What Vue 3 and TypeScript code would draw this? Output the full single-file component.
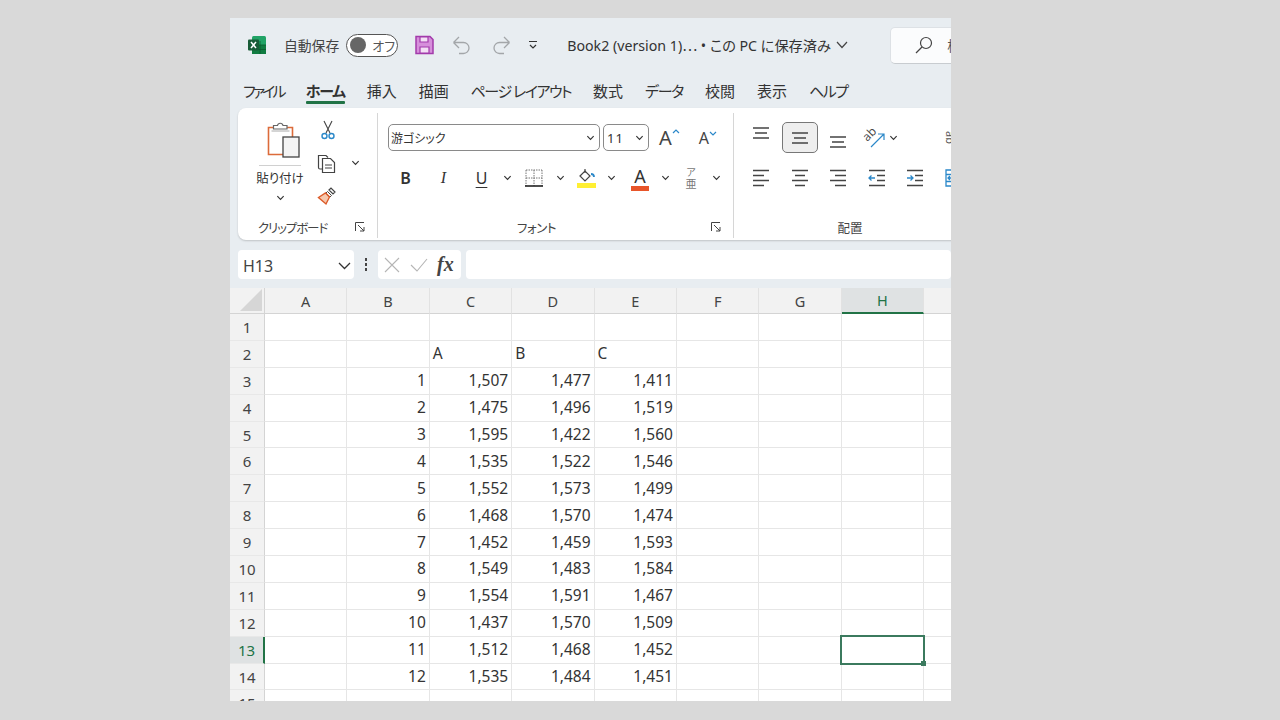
<script setup lang="ts">
// track はカタカナ幅を詰めるための字間（px）
const tabs = [
  { label: 'ファイル', track: -2.8 },
  { label: 'ホーム', track: -1.3 },
  { label: '挿入', track: 0 },
  { label: '描画', track: 0 },
  { label: 'ページ レイアウト', track: -1.5 },
  { label: '数式', track: 0 },
  { label: 'データ', track: -1.3 },
  { label: '校閲', track: 0 },
  { label: '表示', track: 0 },
  { label: 'ヘルプ', track: -1.6 }
]
const columns = ['A', 'B', 'C', 'D', 'E', 'F', 'G', 'H', 'I']

const values: number[][] = [
  [1507, 1477, 1411],
  [1475, 1496, 1519],
  [1595, 1422, 1560],
  [1535, 1522, 1546],
  [1552, 1573, 1499],
  [1468, 1570, 1474],
  [1452, 1459, 1593],
  [1549, 1483, 1584],
  [1554, 1591, 1467],
  [1437, 1570, 1509],
  [1512, 1468, 1452],
  [1535, 1484, 1451]
]

interface Cell {
  text: string
  kind: '' | 'num' | 'label'
  selected: boolean
}

// 行データをセルの配列に展開する
const buildRow = (row: number): Cell[] => {
  return columns.map((col, i) => {
    const cell: Cell = { text: '', kind: '', selected: row === 13 && col === 'H' }
    if (row === 2 && i >= 2 && i <= 4) {
      cell.text = ['A', 'B', 'C'][i - 2]
      cell.kind = 'label'
    }
    if (row >= 3 && row <= 14) {
      if (i === 1) {
        cell.text = String(row - 2)
        cell.kind = 'num'
      }
      if (i >= 2 && i <= 4) {
        cell.text = values[row - 3][i - 2].toLocaleString('en-US')
        cell.kind = 'num'
      }
    }
    return cell
  })
}

const rows = Array.from({ length: 15 }, (_, i) => ({ no: i + 1, cells: buildRow(i + 1) }))

const alignLeft = 'M1 1.500h16M1 6.500h11M1 11.500h16M1 16.500h11'
const alignCenter = 'M1 1.500h16M4 6.500h10M1 11.500h16M4 16.500h10'
const alignRight = 'M1 1.500h16M6 6.500h11M1 11.500h16M6 16.500h11'
</script>

<template>
  <div class="page">
    <div class="window">
      <div class="titlebar">
        <svg class="excel" width="20" height="20" viewBox="0 0 20 20">
          <rect x="5" y="1" width="14" height="18" rx="1.500" fill="#21a366" />
          <rect x="5" y="10" width="14" height="9" fill="#107c41" />
          <path d="M13 6v13M9 10h10M9 14.500h10" stroke="#0b5a2f" stroke-width="0.800" />
          <rect x="1" y="4.500" width="11" height="11" rx="1" fill="#185c37" />
          <path d="M4 7l5 6M9 7l-5 6" stroke="#fff" stroke-width="1.500" />
        </svg>
        <span class="autosave">自動保存</span>
        <div class="toggle"><i class="knob"></i><span>オフ</span></div>
        <svg class="save" width="19" height="20" viewBox="0 0 19 20">
          <path d="M1 1.500h14l3 3v14H1z" fill="#d68fdb" stroke="#a23bab" stroke-width="1.500" />
          <path d="M5 2h8v5H5zM5 12h9v6H5z" fill="#f3dff5" stroke="#a23bab" stroke-width="1.200" />
        </svg>
        <svg class="undo" width="20" height="20" viewBox="0 0 20 20" fill="none" stroke="#a3a6a9" stroke-width="1.300">
          <path d="M1.500 7.500h10a5.500 5.500 0 0 1 0 11H7M1.500 7.500L7 2M1.500 7.500L7 13" />
        </svg>
        <svg class="redo" width="20" height="20" viewBox="0 0 20 20" fill="none" stroke="#a3a6a9" stroke-width="1.300">
          <path d="M18.500 7.500h-10a5.500 5.500 0 0 0 0 11H13M18.500 7.500L13 2M18.500 7.500L13 13" />
        </svg>
        <svg class="qat-more" width="10" height="10" viewBox="0 0 10 10" fill="none" stroke="#333" stroke-width="1.200">
          <path d="M1 1.500h8M2 5l3 3 3-3" />
        </svg>
        <span class="doc">Book2 (version 1)⋯ • この PC に保存済み</span>
        <svg class="doc-chev" width="12" height="8" viewBox="0 0 12 8" fill="none" stroke="#444" stroke-width="1.200">
          <path d="M1 1l5 5.500L11 1" />
        </svg>
        <div class="search">
          <svg width="18" height="18" viewBox="0 0 18 18" fill="none" stroke="#444" stroke-width="1.200">
            <circle cx="11" cy="7" r="5.500" />
            <path d="M7 11l-6 6" />
          </svg>
          <span>検</span>
        </div>
      </div>

      <div class="tabs">
        <span
          v-for="tab in tabs"
          :key="tab.label"
          class="tab"
          :class="{ active: tab.label === 'ホーム' }"
          :style="{ letterSpacing: tab.track + 'px' }"
        >{{ tab.label }}</span>
      </div>

      <div class="ribbon">
        <section class="group clipboard">
          <div class="group-body clip-body">
            <div class="paste">
              <svg class="paste-icon" width="34" height="38" viewBox="0 0 34 38" fill="none">
                <path d="M1.500 6.500h24v27h-24z" stroke="#dc6b3a" stroke-width="1.600" />
                <path d="M6.500 8V4.500h4a2.800 2.800 0 0 1 5.500 0h4V8z" fill="#fff" stroke="#666" stroke-width="1.200" />
                <path d="M4.500 10h18" stroke="#aaa" stroke-width="1" />
                <rect x="16" y="16" width="16" height="20" fill="#f4f4f4" stroke="#444" stroke-width="1.300" />
              </svg>
              <i class="paste-line"></i>
              <span>貼り付け</span>
              <svg class="chev" viewBox="0 0 10 6"><path d="M1.500 1l3.500 3.500L8.500 1" /></svg>
            </div>
            <div class="clip-tools">
              <svg width="16" height="20" viewBox="0 0 16 20" fill="none">
                <path d="M4 1l6 12M12 1L6 13" stroke="#444" stroke-width="1.100" />
                <circle cx="4.500" cy="16" r="2.500" stroke="#2b88c9" stroke-width="1.400" />
                <circle cx="11.500" cy="16" r="2.500" stroke="#2b88c9" stroke-width="1.400" />
              </svg>
              <div class="copy-row">
                <svg width="20" height="20" viewBox="0 0 20 20" fill="none" stroke="#444" stroke-width="1.200">
                  <path d="M5 16H3a1.500 1.500 0 0 1-1.500-1.500V2.500H9l2 2" />
                  <path d="M5.500 5.500h8l4 4v10h-12z" fill="#fff" />
                  <path d="M8 12h7M8 15h7" stroke-width="1" />
                </svg>
                <svg class="chev" viewBox="0 0 10 6"><path d="M1.500 1l3.500 3.500L8.500 1" /></svg>
              </div>
              <svg width="20" height="20" viewBox="0 0 20 20" fill="none">
                <path d="M12 4l2-2 4 4-2 2z" fill="#fff" stroke="#444" stroke-width="1.200" />
                <path d="M10.500 5.500l4 4-1.500 1.500-4-4z" fill="#fff" stroke="#444" stroke-width="1" />
                <path d="M8.500 7l4 4-3.500 7-7.500-6.500z" fill="#f6c8ae" stroke="#dc5a28" stroke-width="1.400" />
              </svg>
            </div>
          </div>
          <div class="group-foot">
            <span class="group-label">クリップボード</span>
            <svg class="launcher" viewBox="0 0 10 10"><path d="M.5 9V.5H9M3 3l6 6M9 5v4H5" /></svg>
          </div>
        </section>

        <section class="group font">
          <div class="group-body font-body">
            <div class="font-row">
              <div class="select font-name">
                <span>游ゴシック</span>
                <svg class="chev" viewBox="0 0 10 6"><path d="M1.500 1l3.500 3.500L8.500 1" /></svg>
              </div>
              <div class="select font-size">
                <span>11</span>
                <svg class="chev" viewBox="0 0 10 6"><path d="M1.500 1l3.500 3.500L8.500 1" /></svg>
              </div>
              <span class="grow big">A<svg viewBox="0 0 8 5"><path d="M1 4l3-3 3 3" /></svg></span>
              <span class="grow small">A<svg viewBox="0 0 8 5"><path d="M1 1l3 3 3-3" /></svg></span>
            </div>
            <div class="fmt-row">
              <span class="fmt bold">B</span>
              <span class="fmt italic">I</span>
              <span class="fmt under">U</span>
              <svg class="chev" viewBox="0 0 10 6"><path d="M1.500 1l3.500 3.500L8.500 1" /></svg>
              <svg class="fmt-icon" width="18" height="18" viewBox="0 0 18 18" fill="none" stroke="#777" stroke-width="1" stroke-dasharray="1.500 1">
                <path d="M1 1h16M1 1v16M17 1v16M9 1v16M1 9h16" />
                <path d="M0 17h18" stroke="#222" stroke-width="1.600" stroke-dasharray="none" />
              </svg>
              <svg class="chev" viewBox="0 0 10 6"><path d="M1.500 1l3.500 3.500L8.500 1" /></svg>
              <svg class="fmt-icon fill" width="20" height="20" viewBox="0 0 20 20" fill="none">
                <path d="M3 8l5-5 5 5-5 5z" stroke="#444" stroke-width="1.200" />
                <path d="M8 1v4" stroke="#444" stroke-width="1.200" />
                <path d="M14 6c2 0 3 1 3 3" stroke="#2b88c9" stroke-width="1.800" />
                <rect x="0" y="15" width="19" height="5" fill="#ffef33" />
              </svg>
              <svg class="chev" viewBox="0 0 10 6"><path d="M1.500 1l3.500 3.500L8.500 1" /></svg>
              <span class="fmt color">A</span>
              <svg class="chev" viewBox="0 0 10 6"><path d="M1.500 1l3.500 3.500L8.500 1" /></svg>
              <span class="fmt phonetic"><small>ア</small>亜</span>
              <svg class="chev" viewBox="0 0 10 6"><path d="M1.500 1l3.500 3.500L8.500 1" /></svg>
            </div>
          </div>
          <div class="group-foot">
            <span class="group-label">フォント</span>
            <svg class="launcher" viewBox="0 0 10 10"><path d="M.5 9V.5H9M3 3l6 6M9 5v4H5" /></svg>
          </div>
        </section>

        <section class="group align">
          <div class="group-body align-body">
            <div class="align-row top">
              <div class="al-cell up"><svg class="al" viewBox="0 0 18 14"><path d="M1 2h16M3 7h12M1 12h16" /></svg></div>
              <div class="al-cell on"><svg class="al" viewBox="0 0 18 14"><path d="M1 2h16M3 7h12M1 12h16" /></svg></div>
              <div class="al-cell down"><svg class="al" viewBox="0 0 18 14"><path d="M1 2h16M3 7h12M1 12h16" /></svg></div>
              <div class="orient">
                <svg class="orient-icon" width="22" height="22" viewBox="0 0 22 22" fill="none">
                  <text x="-1" y="11" font-size="12" transform="rotate(-45 6 8)" fill="#444" font-family="Open Sans, sans-serif">ab</text>
                  <path d="M7 20L20 7M14 7h6v6" stroke="#2b88c9" stroke-width="1.200" />
                </svg>
                <svg class="chev" viewBox="0 0 10 6"><path d="M1.500 1l3.500 3.500L8.500 1" /></svg>
              </div>
              <span class="wrap-cut">ab</span>
            </div>
            <div class="align-row">
              <div class="al-cell"><svg class="al tall" viewBox="0 0 18 18"><path :d="alignLeft" /></svg></div>
              <div class="al-cell"><svg class="al tall" viewBox="0 0 18 18"><path :d="alignCenter" /></svg></div>
              <div class="al-cell"><svg class="al tall" viewBox="0 0 18 18"><path :d="alignRight" /></svg></div>
              <div class="al-cell">
                <svg class="al tall" viewBox="0 0 18 18">
                  <path d="M1 1.500h16M1 16.500h16M9 6.500h8M9 11.500h8" />
                  <path d="M7 9H1M3.500 6.500L1 9l2.500 2.500" stroke="#2b88c9" />
                </svg>
              </div>
              <div class="al-cell">
                <svg class="al tall" viewBox="0 0 18 18">
                  <path d="M1 1.500h16M1 16.500h16M9 6.500h8M9 11.500h8" />
                  <path d="M1 9h6M4.500 6.500L7 9l-2.500 2.500" stroke="#2b88c9" />
                </svg>
              </div>
              <div class="al-cell">
                <svg class="al tall" viewBox="0 0 18 18">
                  <path d="M1 1h16v16H1zM1 5.500h16M1 12.500h16" stroke="#2b88c9" />
                  <path d="M8 9H3M5 7L3 9l2 2" stroke="#2b88c9" />
                </svg>
              </div>
            </div>
          </div>
          <div class="group-foot">
            <span class="group-label">配置</span>
          </div>
        </section>
      </div>

      <div class="formula">
        <div class="namebox">
          <span>H13</span>
          <svg width="13" height="8" viewBox="0 0 13 8" fill="none" stroke="#333" stroke-width="1.300"><path d="M1 1l5.500 5.500L12 1" /></svg>
        </div>
        <div class="dots"><i></i><i></i><i></i></div>
        <div class="fx-box">
          <svg width="16" height="16" viewBox="0 0 16 16" fill="none" stroke="#b5b5b5" stroke-width="1.100"><path d="M1 1l14 14M15 1L1 15" /></svg>
          <svg width="18" height="14" viewBox="0 0 18 14" fill="none" stroke="#b5b5b5" stroke-width="1.100"><path d="M1 7l6 6L17 1" /></svg>
          <span class="fx">fx</span>
        </div>
        <div class="input"></div>
      </div>

      <div class="sheet">
        <div class="corner"><i></i></div>
        <div v-for="col in columns" :key="col" class="col-head" :class="{ current: col === 'H' }">{{ col }}</div>
        <template v-for="row in rows" :key="row.no">
          <div class="row-head" :class="{ current: row.no === 13 }">{{ row.no }}</div>
          <div
            v-for="(cell, i) in row.cells"
            :key="i"
            class="cell"
            :class="[cell.kind, { selected: cell.selected }]"
          >
            {{ cell.text }}
            <i v-if="cell.selected" class="handle"></i>
          </div>
        </template>
      </div>
    </div>
  </div>
</template>

<style>
body {
  background: #d9d9d9;
}
</style>

<style scoped>
.page {
  width: 1280px;
  height: 720px;
  box-sizing: border-box;
  padding: 18px 0 19px 230px;
  background: #d9d9d9;
  overflow: hidden;
  font-family: "Noto Sans", "Noto Sans CJK JP", sans-serif;
  font-feature-settings: "palt";
  color: #333;
}

.window {
  width: 721px;
  height: 683px;
  background: #e8edf1;
  overflow: hidden;
}

/* タイトルバー */
.titlebar {
  height: 54px;
  display: flex;
  align-items: center;
  padding-left: 17px;
  white-space: nowrap;
}

.titlebar > * {
  flex-shrink: 0;
}

.autosave {
  margin-left: 17px;
  font-size: 13.800px;
  color: #444;
}

.toggle {
  margin-left: 7px;
  width: 52px;
  height: 23px;
  box-sizing: border-box;
  border: 1.500px solid #555;
  border-radius: 12px;
  background: #fff;
  display: flex;
  align-items: center;
  padding-left: 3px;
  font-size: 13px;
  color: #555;
}

.knob {
  width: 16px;
  height: 16px;
  border-radius: 50%;
  background: #666;
  margin-right: 6px;
}

.save {
  margin-left: 17px;
}

.undo {
  margin-left: 18px;
}

.redo {
  margin-left: 19px;
}

.qat-more {
  margin-left: 17px;
}

.doc {
  margin-left: 29px;
  width: 265px;
  font-size: 14.200px;
  color: #333;
}

.doc-chev {
  margin-left: 4px;
}

.search {
  margin-left: 42px;
  width: 200px;
  height: 37px;
  box-sizing: border-box;
  background: #fbfcfd;
  border: 1px solid #dde1e5;
  border-bottom-color: #c8ccd0;
  border-radius: 5px;
  display: flex;
  align-items: center;
  gap: 14px;
  padding-left: 24px;
  font-size: 14px;
  color: #555;
}

/* タブ */
.tabs {
  height: 36px;
  display: flex;
  align-items: center;
  gap: 22px;
  padding-left: 13px;
  white-space: nowrap;
  font-size: 15px;
  color: #333;
}

.tab {
  position: relative;
}

.tab.active {
  font-weight: 700;
}

.tab.active::after {
  content: "";
  position: absolute;
  left: 0;
  right: 0;
  bottom: -3px;
  height: 2.500px;
  background: #217346;
  border-radius: 1px;
}

/* リボン */
.ribbon {
  margin-left: 8px;
  height: 132px;
  width: 760px;
  box-sizing: border-box;
  padding: 5px 0 2px;
  background: #fff;
  border-radius: 8px;
  box-shadow: 0 1px 2px rgba(0, 0, 0, 0.18);
  display: flex;
}

.group {
  display: flex;
  flex-direction: column;
  border-right: 1px solid #d6d6d6;
  flex-shrink: 0;
}

.group:last-child {
  border-right: none;
}

.group-body {
  flex: 1;
}

.group-foot {
  position: relative;
  height: 22px;
  display: flex;
  align-items: center;
  justify-content: center;
}

.group-label {
  font-size: 12.500px;
  color: #444;
}

.launcher {
  position: absolute;
  right: 12px;
  top: 6px;
  width: 10px;
  height: 10px;
  fill: none;
  stroke: #444;
  stroke-width: 1;
}

.chev {
  width: 9px;
  height: 6px;
  fill: none;
  stroke: #333;
  stroke-width: 1.300;
  flex-shrink: 0;
}

.clipboard {
  width: 139px;
}

.clipboard .group-label {
  margin-right: 30px;
  letter-spacing: -1.100px;
}

.font .group-label {
  margin-right: 38px;
  letter-spacing: -0.400px;
}

.align .group-label {
  margin-right: 8px;
}

.clip-body {
  display: flex;
}

.paste {
  width: 64px;
  margin-left: 10px;
  display: flex;
  flex-direction: column;
  align-items: center;
  padding-top: 8px;
  font-size: 12.500px;
  color: #333;
}

.paste-icon {
  margin-left: 8px;
}

.paste-line {
  width: 42px;
  height: 1px;
  background: #d0d0d0;
  margin: 6px 0 2px;
}

.paste .chev {
  margin-top: 8px;
}

.clip-tools {
  width: 50px;
  padding-top: 7px;
  display: flex;
  flex-direction: column;
  align-items: flex-start;
  gap: 13px;
  margin-left: 1px;
}

.clip-tools > svg:first-child {
  margin-left: 7px;
}

.clip-tools > svg:last-child {
  margin-left: 4px;
}

.copy-row {
  display: flex;
  align-items: center;
  gap: 14px;
  margin-left: 4px;
}

.font {
  width: 355px;
}

.font-body {
  padding: 11px 0 0 10px;
}

.font-row {
  display: flex;
  align-items: center;
  gap: 3px;
  height: 27px;
}

.select {
  height: 27px;
  box-sizing: border-box;
  border: 1px solid #8a8a8a;
  border-radius: 5px;
  display: flex;
  align-items: center;
  justify-content: space-between;
  padding: 0 4px 0 2px;
  font-size: 12px;
  color: #333;
}

.font-name {
  width: 212px;
}

.font-size {
  width: 46px;
  font-size: 13px;
  letter-spacing: 1px;
  padding-left: 3px;
}

.grow {
  position: relative;
  display: inline-block;
  color: #444;
  line-height: 1;
}

.grow svg {
  position: absolute;
  right: -8px;
  top: 1px;
  width: 8px;
  height: 5px;
  fill: none;
  stroke: #2b88c9;
  stroke-width: 1.200;
}

.big {
  margin-left: 7px;
  font-size: 20px;
}

.small {
  margin-left: 24px;
  font-size: 16px;
}

.fmt-row {
  margin-top: 14px;
  margin-left: 9px;
  height: 26px;
  display: flex;
  align-items: center;
}

.fmt {
  font-size: 16px;
  color: #333;
  text-align: center;
}

.bold {
  width: 17px;
  font-weight: 600;
}

.italic {
  width: 17px;
  margin-left: 21px;
  font-family: "Liberation Serif", serif;
  font-style: italic;
}

.under {
  width: 17px;
  margin-left: 21px;
  margin-right: 13px;
  text-decoration: underline;
  text-underline-offset: 3px;
}

.fmt-icon {
  margin-left: 13px;
  margin-right: 13px;
}

.fmt-icon.fill {
  margin-left: 12px;
  margin-right: 10px;
}

.color {
  width: 18px;
  margin-left: 15px;
  margin-right: 12px;
  font-size: 18px;
  line-height: 20px;
  border-bottom: 5px solid #e8552a;
}

.phonetic {
  width: 14px;
  margin-left: 14px;
  margin-right: 14px;
  display: flex;
  flex-direction: column;
  align-items: center;
  font-size: 11px;
  line-height: 12px;
  color: #777;
}

.phonetic small {
  font-size: 10px;
  line-height: 11px;
}

.align {
  width: 240px;
}

.align-body {
  padding: 9px 0 0 8px;
}

.align-row {
  display: flex;
  align-items: center;
  height: 31px;
  margin-bottom: 12px;
  position: relative;
}

.align-row:last-child {
  height: 26px;
}

.al-cell {
  width: 38.500px;
  height: 31px;
  box-sizing: border-box;
  display: flex;
  align-items: center;
  justify-content: center;
  flex-shrink: 0;
}

.al-cell.on {
  width: 36px;
  margin: 0 1px;
  background: #eeeeee;
  border: 1px solid #777;
  border-radius: 5px;
}

.al-cell.up {
  padding-bottom: 9px;
}

.al-cell.down {
  padding-top: 9px;
}

.al {
  width: 18px;
  height: 14px;
  fill: none;
  stroke: #444;
  stroke-width: 1.300;
}

.al.tall {
  height: 18px;
}

.orient {
  margin-left: 7px;
  display: flex;
  align-items: center;
  gap: 3px;
}

.orient-icon {
  overflow: visible;
}

.wrap-cut {
  margin-left: 46px;
  font-size: 11px;
  color: #555;
  transform: rotate(90deg);
}

/* 数式バー */
.formula {
  margin-top: 10px;
  margin-left: 8px;
  height: 29px;
  display: flex;
  align-items: stretch;
}

.namebox {
  width: 116px;
  background: #fff;
  border-radius: 4px;
  display: flex;
  align-items: center;
  justify-content: space-between;
  box-sizing: border-box;
  padding: 2px 3px 0 5px;
  font-size: 16px;
  color: #444;
}

.dots {
  width: 24px;
  display: flex;
  flex-direction: column;
  align-items: center;
  justify-content: center;
  gap: 2.500px;
}

.dots i {
  width: 2.500px;
  height: 2.500px;
  background: #444;
}

.fx-box {
  width: 83px;
  background: #fff;
  border-radius: 4px;
  display: flex;
  align-items: center;
  gap: 10px;
  box-sizing: border-box;
  padding-left: 6px;
}

.fx {
  font-family: "Liberation Serif", serif;
  font-style: italic;
  font-weight: 700;
  font-size: 20px;
  color: #444;
  margin-left: -1px;
}

.input {
  margin-left: 5px;
  flex: 1;
  background: #fff;
  border-radius: 4px;
}

/* シート */
.sheet {
  margin-top: 9px;
  display: grid;
  grid-template-columns: 35px repeat(8, 82.400px) 60px;
  grid-auto-rows: 26.900px;
  grid-template-rows: 26px;
  background: #fff;
  font-size: 15.500px;
  color: #333;
}

.corner {
  background: #f2f2f2;
  border-right: 1px solid #d4d4d4;
  border-bottom: 1px solid #d4d4d4;
  position: relative;
}

.corner i {
  position: absolute;
  right: 2px;
  bottom: 2px;
  width: 0;
  height: 0;
  border-style: solid;
  border-width: 0 0 22px 22px;
  border-color: transparent transparent #d6d6d6 transparent;
}

.col-head {
  background: #f2f2f2;
  border-right: 1px solid #e2e2e2;
  border-bottom: 1px solid #d4d4d4;
  display: flex;
  align-items: center;
  justify-content: center;
  font-size: 14.500px;
  color: #444;
}

.col-head.current {
  background: #dfe2e3;
  border-bottom: 2px solid #217346;
  color: #217346;
}

.row-head {
  background: #f2f2f2;
  border-right: 1px solid #d4d4d4;
  border-bottom: 1px solid #e8e8e8;
  display: flex;
  align-items: center;
  justify-content: center;
  font-size: 15px;
  color: #444;
}

.row-head.current {
  background: #dfe2e3;
  border-right: 2px solid #217346;
  color: #217346;
}

.cell {
  position: relative;
  box-sizing: border-box;
  border-right: 1px solid #e6e6e6;
  border-bottom: 1px solid #e6e6e6;
  display: flex;
  align-items: center;
  padding: 0 3px 1px;
  white-space: nowrap;
}

.cell.num {
  justify-content: flex-end;
}

.cell.selected {
  z-index: 1;
  border: 2px solid #3b7a5e;
  margin: -2px -1px -1px -2px;
}

.handle {
  position: absolute;
  right: -3px;
  bottom: -3px;
  width: 5px;
  height: 5px;
  background: #3b7a5e;
}
</style>
